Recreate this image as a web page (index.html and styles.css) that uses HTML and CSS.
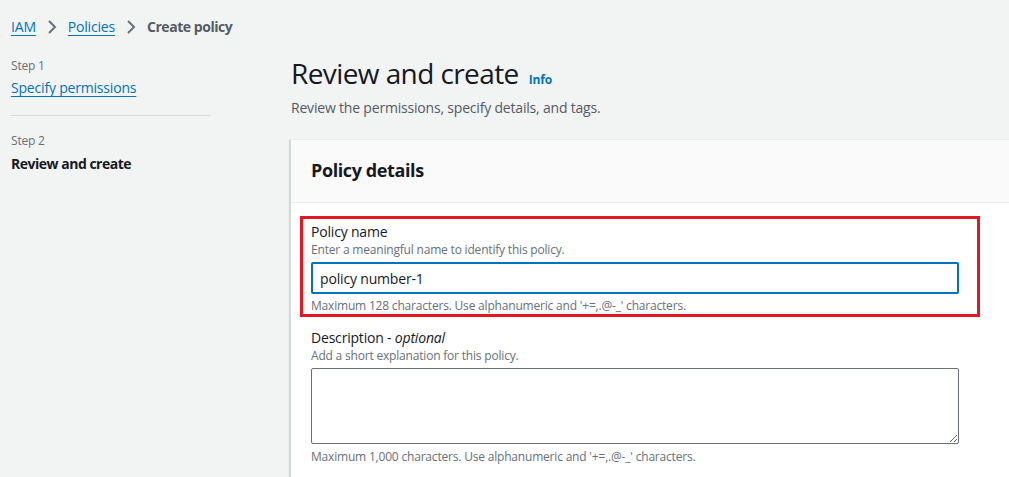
FILE: index.html
```html
<!DOCTYPE html>
<html lang="en">
<head>
<meta charset="utf-8">
<title>Create policy</title>
<link rel="stylesheet" href="styles.css">
</head>
<body>
<nav class="breadcrumbs">
  <a class="crumb-link" href="#">IAM</a>
  <svg class="chevron" viewBox="0 0 16 16" width="16" height="16"><path d="M5 2 L11 8 L5 14" fill="none" stroke="#687078" stroke-width="2"/></svg>
  <a class="crumb-link" href="#">Policies</a>
  <svg class="chevron" viewBox="0 0 16 16" width="16" height="16"><path d="M5 2 L11 8 L5 14" fill="none" stroke="#687078" stroke-width="2"/></svg>
  <span class="crumb-current">Create policy</span>
</nav>
<div class="layout">
  <aside class="wizard-nav">
    <div class="step-label">Step 1</div>
    <a class="step-link" href="#">Specify permissions</a>
    <hr class="step-divider">
    <div class="step-label step-label-2">Step 2</div>
    <div class="step-current">Review and create</div>
  </aside>
  <main class="main">
    <div class="page-header">
      <h1 class="page-title">Review and create</h1>
      <a class="info-link" href="#">Info</a>
    </div>
    <p class="page-desc">Review the permissions, specify details, and tags.</p>
    <section class="panel">
      <div class="panel-header">
        <h2 class="panel-title">Policy details</h2>
      </div>
      <div class="panel-body">
        <div class="highlight">
          <label class="field-label" for="pname">Policy name</label>
          <div class="field-desc">Enter a meaningful name to identify this policy.</div>
          <input id="pname" class="text-input" type="text" value="policy number-1">
          <div class="field-constraint">Maximum 128 characters. Use alphanumeric and '+=,.@-_' characters.</div>
        </div>
        <div class="field">
          <label class="field-label" for="pdesc">Description - <em>optional</em></label>
          <div class="field-desc">Add a short explanation for this policy.</div>
          <textarea id="pdesc" class="text-area"></textarea>
          <div class="field-constraint">Maximum 1,000 characters. Use alphanumeric and '+=,.@-_' characters.</div>
        </div>
      </div>
    </section>
  </main>
</div>
<script src="script.js"></script>
</body>
</html>
```

FILE: styles.css
```css
* { box-sizing: border-box; }
html, body { margin: 0; padding: 0; }
body {
  background: #f2f3f3;
  font-family: "Open Sans", "Liberation Sans", sans-serif;
  letter-spacing: -0.012em;
  color: #16191f;
  overflow: hidden;
  width: 1009px;
  height: 477px;
}
a { color: #0073bb; text-decoration: underline; text-underline-offset: 3px; }

.breadcrumbs {
  display: flex;
  align-items: center;
  padding: 17px 0 0 11px;
  height: 37px;
  font-size: 14px;
  line-height: 20px;
}
.chevron { margin: 0 8px; display: block; }
.crumb-current { color: #545b64; font-weight: 700; letter-spacing: -0.032em; }

.layout {
  display: flex;
  gap: 80px;
  padding-left: 11px;
}
.wizard-nav {
  flex: 0 0 200px;
  padding-top: 21px;
}
.step-label {
  font-size: 12px;
  line-height: 16px;
  color: #687078;
}
.step-link {
  display: inline-block;
  margin-top: 4px;
  font-size: 14px;
  line-height: 20px;
}
.step-divider {
  border: none;
  border-top: 1px solid #d5dbdb;
  margin: 17px 0 0;
  height: 0;
}
.step-label-2 { margin-top: 17px; }
.step-current {
  margin-top: 5px;
  font-size: 14px;
  line-height: 20px;
  font-weight: 700;
  letter-spacing: -0.035em;
}

.main {
  flex: 0 0 780px;
  padding-top: 18px;
}
.page-header {
  display: flex;
  align-items: baseline;
  gap: 10px;
}
.page-title {
  margin: 0;
  font-size: 28px;
  line-height: 36px;
  font-weight: 400;
  letter-spacing: -0.021em;
}
.info-link {
  font-size: 12px;
  font-weight: 700;
  text-decoration: none;
}
.page-desc {
  margin: 7px 0 0;
  font-size: 14px;
  line-height: 20px;
  color: #545b64;
}

.panel {
  margin-top: 21px;
  margin-left: -1px;
  background: #fff;
  border-top: 1px solid #eaeded;
  border-left: 1px solid #d5dbdb;
  box-shadow: -1px 1px 1px 0 rgba(0, 28, 36, 0.12);
  height: 400px;
}
.panel-header {
  background: #fafafa;
  border-bottom: 1px solid #eaeded;
  padding: 19px 20px 21px 20px;
}
.panel-title {
  margin: 0;
  font-size: 18px;
  line-height: 22px;
  font-weight: 700;
  letter-spacing: -0.022em;
}
.panel-body {
  padding: 13px 0 0 9px;
}
.highlight {
  width: 680px;
  border: 3px solid #e5171f;
  padding: 3px 18px 0 8px;
}
.field { padding-left: 11px; margin-top: 11px; width: 659px; }
.field-label {
  display: block;
  font-size: 14px;
  line-height: 20px;
}
.field-label em { font-style: italic; }
.field-desc {
  font-size: 12px;
  line-height: 16px;
  color: #687078;
}
.text-input {
  display: block;
  width: 648px;
  height: 32px;
  margin-top: 4px;
  border: 2px solid #0073bb;
  border-radius: 2px;
  padding: 0 7px;
  font-family: "Open Sans", "Liberation Sans", sans-serif;
  letter-spacing: -0.012em;
  font-size: 14px;
  color: #16191f;
  caret-color: #16191f;
  background: #fff;
  outline: none;
}
.text-area {
  display: block;
  width: 648px;
  height: 76px;
  margin-top: 4px;
  border: 1px solid #687078;
  border-radius: 2px;
  font-family: "Open Sans", "Liberation Sans", sans-serif;
  font-size: 14px;
  background: #fff;
}
.field-constraint {
  margin-top: 4px;
  font-size: 12px;
  line-height: 16px;
  color: #687078;
}
.field .field-constraint { margin-top: 5px; }
```

FILE: script.js
```js
var input = document.getElementById('pname');
input.focus();
input.setSelectionRange(input.value.length, input.value.length);
```
